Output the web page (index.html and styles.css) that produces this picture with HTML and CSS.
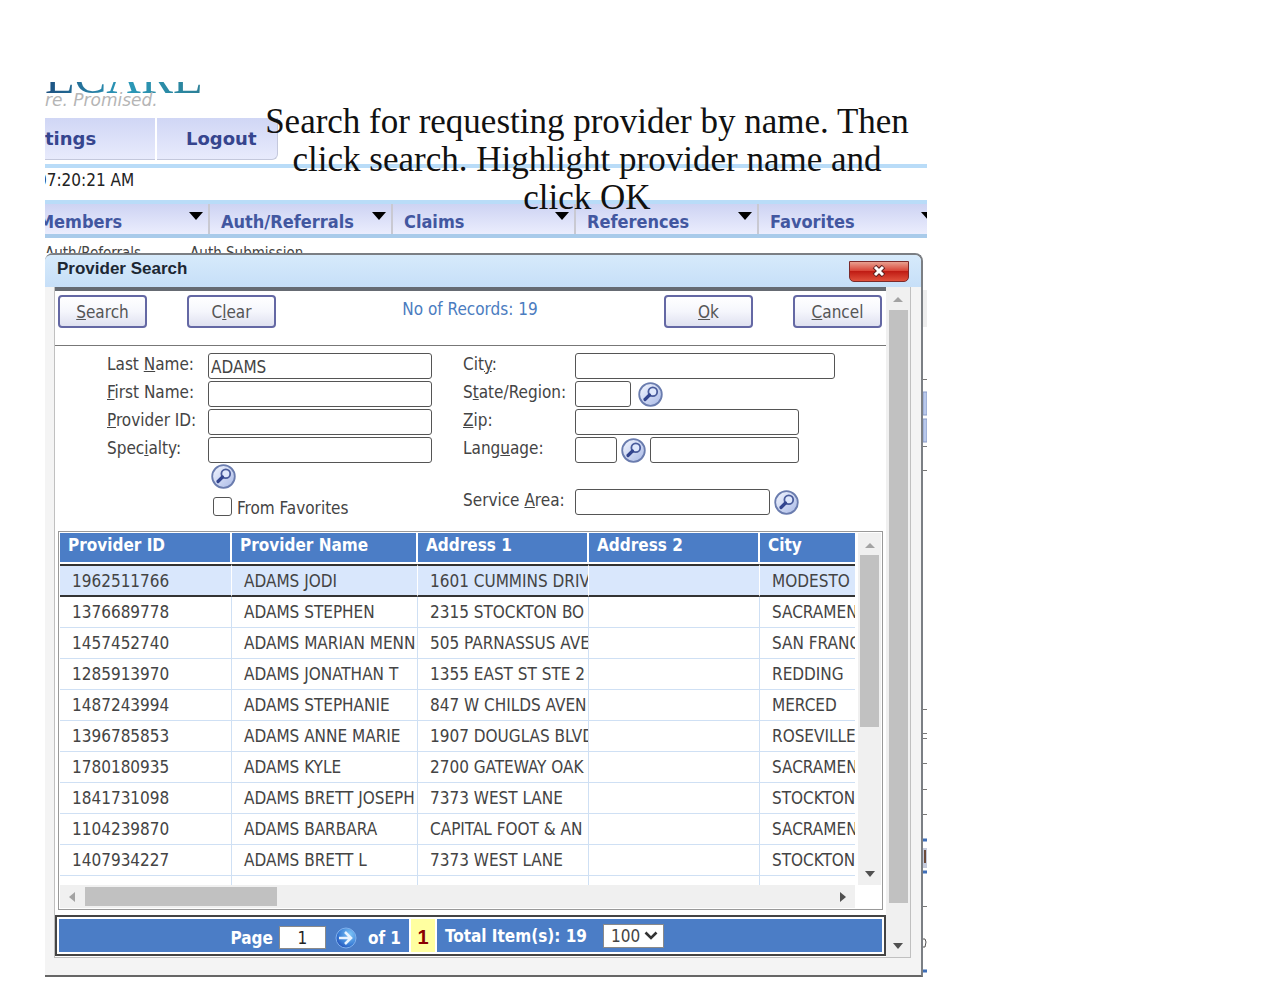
FILE: index.html
```html
<!DOCTYPE html>
<html lang="en">
  <head>
    <meta charset="UTF-8" />
    <meta name="viewport" content="width=device-width, initial-scale=1.0" />
    <title>Provider Search</title>
    <link rel="stylesheet" href="styles.css">
  </head>
  <body>
    <!-- shared icons -->
    <svg class="defs" aria-hidden="true">
      <defs>
        <linearGradient id="lens" x1="0" y1="0" x2="1" y2="1">
          <stop offset="0" stop-color="#f4f7ff" />
          <stop offset="1" stop-color="#a9b9e6" />
        </linearGradient>
        <radialGradient id="ball" cx="0.7" cy="0.3" r="0.9">
          <stop offset="0" stop-color="#7cc4f8" />
          <stop offset="0.6" stop-color="#3b7fd6" />
          <stop offset="1" stop-color="#1c3fae" />
        </radialGradient>
      </defs>
      <symbol id="find" viewBox="0 0 25 25">
        <circle cx="12.5" cy="12.5" r="11.3" fill="url(#lens)" stroke="#6a7cae" stroke-width="1.8" />
        <circle cx="14.8" cy="9.8" r="4.4" fill="#dfe8fc" stroke="#4a5c9c" stroke-width="1.8" />
        <path d="M11.5 13 L7 17.5" stroke="#33458f" stroke-width="3.2" stroke-linecap="round" />
      </symbol>
    </svg>

    <div class="page">
      <header>
        <div class="logo">ECARE</div>
        <div class="tagline">re. Promised.</div>
        <nav class="tabs">
          <a href="#" class="tab first">tings</a>
          <a href="#" class="tab last">Logout</a>
        </nav>
        <div class="time"><span>07:20:21 AM</span></div>
        <nav class="menu">
          <a href="#">Members</a>
          <a href="#">Auth/Referrals</a>
          <a href="#">Claims</a>
          <a href="#">References</a>
          <a href="#">Favorites</a>
        </nav>
        <div class="crumbs"><span>Auth/Referrals</span><span>Auth Submission</span></div>
      </header>

      <p class="note">Search for requesting provider by name. Then click search. Highlight provider name and click OK</p>

      <div class="stage">
        <div class="dialog">
          <div class="titlebar">
            <h1>Provider Search</h1>
            <button class="close" aria-label="Close">
              <svg width="14" height="12" viewBox="0 0 14 12">
                <path d="M2.5 1.5 L11.5 10.5 M11.5 1.5 L2.5 10.5" stroke="#5c2020" stroke-width="5" />
                <path d="M3 2 L11 10 M11 2 L3 10" stroke="#fff" stroke-width="3" />
              </svg>
            </button>
          </div>

          <div class="body">
            <div class="content">
              <div class="toolbar">
                <button><u>S</u>earch</button>
                <button>C<u>l</u>ear</button>
                <span class="records">No of Records: 19</span>
                <button><u>O</u>k</button>
                <button><u>C</u>ancel</button>
              </div>

              <form class="fields">
                <div class="col">
                  <div class="row"><label for="last">Last <u>N</u>ame:</label><input type="text" id="last" class="w224" value="ADAMS"></div>
                  <div class="row"><label for="firstname"><u>F</u>irst Name:</label><input type="text" id="firstname" class="w224"></div>
                  <div class="row"><label for="pid"><u>P</u>rovider ID:</label><input type="text" id="pid" class="w224"></div>
                  <div class="row"><label for="spec">Spec<u>i</u>alty:</label><input type="text" id="spec" class="w224"></div>
                  <div class="under">
                    <button type="button" class="find" aria-label="Find specialty"><svg><use href="#find" /></svg></button>
                  </div>
                  <div class="under fav">
                    <input type="checkbox" id="fav"><label for="fav">From Favorites</label>
                  </div>
                </div>
                <div class="col right">
                  <div class="row"><label for="city">Cit<u>y</u>:</label><input type="text" id="city" class="w260"></div>
                  <div class="row"><label for="state">S<u>t</u>ate/Region:</label><input type="text" id="state" class="w56">
                    <button type="button" class="find wide" aria-label="Find state"><svg><use href="#find" /></svg></button></div>
                  <div class="row"><label for="zip"><u>Z</u>ip:</label><input type="text" id="zip" class="w224"></div>
                  <div class="row"><label for="lang">Lang<u>u</u>age:</label><input type="text" id="lang" class="w42">
                    <button type="button" class="find" aria-label="Find language"><svg><use href="#find" /></svg></button>
                    <input type="text" aria-label="Language name" class="w149"></div>
                  <div class="row area"><label for="area">Service <u>A</u>rea:</label><input type="text" id="area" class="w195">
                    <button type="button" class="find" aria-label="Find service area"><svg><use href="#find" /></svg></button></div>
                </div>
              </form>

              <div class="results">
                <div class="rows">
                  <div class="clip">
                    <table>
                      <colgroup>
                        <col class="c-id"><col class="c-name"><col class="c-addr"><col class="c-addr"><col>
                      </colgroup>
                      <thead>
                        <tr><th>Provider ID</th><th>Provider Name</th><th>Address 1</th><th>Address 2</th><th>City</th></tr>
                      </thead>
                      <tbody>
                        <tr class="selected"><td>1962511766</td><td>ADAMS JODI</td><td>1601 CUMMINS DRIV</td><td></td><td>MODESTO</td></tr>
                        <tr><td>1376689778</td><td>ADAMS STEPHEN</td><td>2315 STOCKTON BO</td><td></td><td>SACRAMEN</td></tr>
                        <tr><td>1457452740</td><td>ADAMS MARIAN MENN</td><td>505 PARNASSUS AVE</td><td></td><td>SAN FRANC</td></tr>
                        <tr><td>1285913970</td><td>ADAMS JONATHAN T</td><td>1355 EAST ST STE 2</td><td></td><td>REDDING</td></tr>
                        <tr><td>1487243994</td><td>ADAMS STEPHANIE</td><td>847 W CHILDS AVEN</td><td></td><td>MERCED</td></tr>
                        <tr><td>1396785853</td><td>ADAMS ANNE MARIE</td><td>1907 DOUGLAS BLVD</td><td></td><td>ROSEVILLE</td></tr>
                        <tr><td>1780180935</td><td>ADAMS KYLE</td><td>2700 GATEWAY OAK</td><td></td><td>SACRAMEN</td></tr>
                        <tr><td>1841731098</td><td>ADAMS BRETT JOSEPH</td><td>7373 WEST LANE</td><td></td><td>STOCKTON</td></tr>
                        <tr><td>1104239870</td><td>ADAMS BARBARA</td><td>CAPITAL FOOT &amp; AN</td><td></td><td>SACRAMEN</td></tr>
                        <tr><td>1407934227</td><td>ADAMS BRETT L</td><td>7373 WEST LANE</td><td></td><td>STOCKTON</td></tr>
                        <tr><td></td><td></td><td></td><td></td><td></td></tr>
                      </tbody>
                    </table>
                  </div>
                  <div class="vbar">
                    <i class="up"></i>
                    <div class="thumb short"></div>
                    <i class="down"></i>
                  </div>
                </div>
                <div class="hbar">
                  <i class="left"></i>
                  <div class="hthumb"></div>
                  <i class="next"></i>
                </div>
              </div>

              <div class="pager">
                <div class="pages">
                  <label for="page">Page</label>
                  <input type="text" id="page" value="1">
                  <button class="go" aria-label="Go to page">
                    <svg width="22" height="22" viewBox="0 0 22 22">
                      <circle cx="11" cy="11" r="10" fill="url(#ball)" stroke="#7fb0ec" />
                      <path d="M4 11 H15 M10 5 L16 11 L10 17" fill="none" stroke="#e8f3ff" stroke-width="2.6" />
                    </svg>
                  </button>
                  <span>of 1</span>
                </div>
                <a href="#" class="current">1</a>
                <div class="total">
                  <label for="size">Total Item(s): 19</label>
                  <span class="size">
                    <select id="size"><option>100</option></select>
                    <svg width="14" height="9" viewBox="0 0 14 9"><path d="M1.5 1.5 L7 7 L12.5 1.5" fill="none" stroke="#333" stroke-width="2.6" /></svg>
                  </span>
                </div>
              </div>
            </div>

            <div class="vbar outer">
              <i class="up"></i>
              <div class="thumb"></div>
              <i class="down"></i>
            </div>
          </div>
        </div>

        <!-- edge of the form behind the dialog -->
        <svg class="edge" width="4" height="724" viewBox="0 0 4 724">
          <path d="M0 37 H4 V74 H0 Z" fill="#eeeeee" />
          <path d="M0 139 H4 V162 H0 Z M0 166 H4 V189 H0 Z" fill="#b9c9ec" stroke="#8a9cc8" />
          <path d="M0 126.5 H4 M0 193.5 H4 M0 217.5 H4 M0 456.5 H4 M0 480.5 H4 M0 485.5 H4 M0 510.5 H4 M0 536.5 H4 M0 561.5 H4 M0 653.5 H4" stroke="#777" />
          <path d="M0 587 H4 M0 619 H4 M0 718 H4" stroke="#3f6fb8" stroke-width="3" />
          <path d="M0 595 H4 V615 H0 Z" fill="#c5cbdc" />
          <path d="M2 597 V610" stroke="#6b4a3a" stroke-width="2" />
          <path d="M0 686 H2 L3 689 L2 694 H0" fill="none" stroke="#555" />
        </svg>
      </div>
    </div>
  </body>
</html>
```
FILE: styles.css
```css
/* CSS styles */
* {
  box-sizing: border-box;
}

body {
  margin: 0;
  padding: 82px 45px 0;
  background-color: #fff;
  font-family: "DejaVu Sans Condensed", "Noto Sans", sans-serif;
  font-size: 17px;
  color: #444;
}

.defs {
  position: absolute;
  width: 0;
  height: 0;
}

.page {
  position: relative;
  max-width: 882px;
  overflow: hidden;
}

a {
  text-decoration: none;
}

button,
input,
select {
  font: inherit;
  color: inherit;
}

/* header */
.logo {
  display: flex;
  align-items: flex-end;
  width: max-content;
  height: 11px;
  overflow: hidden;
  font-family: "Liberation Serif", serif;
  font-size: 48px;
  line-height: 32px;
  background: linear-gradient(90deg, #1d5080, #2b9aba 50%, #2b7f96);
  background-clip: text;
  -webkit-background-clip: text;
  color: transparent;
}

.tagline {
  height: 14px;
  font-family: "DejaVu Sans", sans-serif;
  font-size: 17px;
  font-style: italic;
  line-height: 14px;
  color: #b5b5b5;
}

.tabs {
  display: flex;
  gap: 2px;
  margin-top: 11px;
}

.tab {
  height: 42px;
  background: linear-gradient(#d0d6f5, #e8ebfc);
  border-bottom: 1px solid #c4c8dc;
  font-family: "DejaVu Sans", sans-serif;
  font-size: 18px;
  font-weight: bold;
  line-height: 42px;
  color: #36458e;
}

.first {
  width: 110px;
}

.last {
  width: 121px;
  padding-left: 29px;
  border-right: 1px solid #c4c8dc;
  border-bottom-right-radius: 6px;
}

.time {
  height: 36px;
  margin-top: 4px;
  border-top: 4px solid #b9dcf8;
  line-height: 24px;
  color: #222;
}

.time span {
  margin-left: -8px;
}

.menu {
  display: flex;
  width: 1098px;
  height: 38px;
  margin-left: -18px;
  border-top: 4px solid #b9dcf8;
  border-bottom: 4px solid #a9cbea;
  background: linear-gradient(#cdd3f3, #ebedfd);
}

.menu a {
  display: flex;
  justify-content: space-between;
  width: 183px;
  padding-left: 11px;
  padding-right: 5px;
  border-right: 2px solid #c9c9d2;
  font-size: 18px;
  font-weight: bold;
  line-height: 36px;
  color: #4257a0;
}

.menu a::after {
  content: "";
  height: 8px;
  margin-top: 8px;
  border: 7px solid transparent;
  border-top: 8px solid #000;
  border-bottom: 0;
}

.crumbs {
  display: flex;
  gap: 49px;
  height: 15px;
  padding-top: 8px;
  overflow: hidden;
  font-size: 15px;
  line-height: 15px;
}

/* instruction text over the page */
.note {
  position: absolute;
  top: 21px;
  left: 217px;
  width: 650px;
  margin: 0;
  font-family: "Liberation Serif", serif;
  font-size: 35px;
  line-height: 38px;
  text-align: center;
  color: #111;
}

/* dialog */
.stage {
  display: flex;
}

.edge {
  flex: none;
}

.dialog {
  flex: 1;
  border: 2px solid #7b7f84;
  border-left: 0;
  border-bottom-color: #666;
  border-radius: 8px 8px 0 0;
  background-color: #f4f4f4;
}

.titlebar {
  display: flex;
  justify-content: space-between;
  align-items: center;
  height: 32px;
  padding: 0 12px;
  background: linear-gradient(#d6eafb, #c6dff8);
  border-radius: 6px 6px 0 0;
}

h1 {
  margin: 0;
  padding-bottom: 4px;
  font-family: "Liberation Sans", sans-serif;
  font-size: 17px;
  line-height: 24px;
  color: #1c2733;
}

.close {
  display: flex;
  align-items: center;
  justify-content: center;
  width: 60px;
  height: 21px;
  padding: 0;
  border: 1px solid #7c2a2a;
  border-radius: 0 0 5px 5px;
  background: linear-gradient(#e8a090, #d9473a 45%, #c01c14 50%, #e0503c);
}

.body {
  display: flex;
  margin: 0 10px 17px 9px;
  border: 1px solid #c0c0c0;
  border-top: 0;
  background-color: #fff;
}

.content {
  flex: 1;
  min-width: 0;
  padding-bottom: 1px;
  border-top: 4px solid #666b73;
}

.toolbar {
  display: flex;
  align-items: center;
  gap: 40px;
  height: 55px;
  padding: 4px 4px 18px 3px;
  border-bottom: 1px solid #777;
}

.toolbar button {
  width: 89px;
  height: 33px;
  padding: 2px 0 0;
  border: 2px solid #6468a4;
  border-radius: 4px;
  background: linear-gradient(#fff, #f5f6fc 50%, #dfe1f0);
  color: #555;
}

.records {
  flex: 1;
  padding-bottom: 4px;
  text-align: center;
  line-height: 24px;
  color: #4b7cc0;
}

/* search fields */
.fields {
  display: flex;
  height: 185px;
  padding: 6px 0 0 52px;
}

.col {
  width: 356px;
}

.row {
  display: flex;
  align-items: center;
  height: 28px;
}

.row label {
  width: 101px;
  padding-bottom: 4px;
  line-height: 24px;
  white-space: nowrap;
}

.right {
  flex: 1;
}

.right .row label {
  width: 112px;
}

.row input {
  height: 26px;
  padding: 2px 2px 0;
  border: 1px solid #555;
  border-radius: 3px;
  background-color: #fff;
}

.w42 { width: 42px; }
.w56 { width: 56px; }
.w149 { width: 149px; }
.w195 { width: 195px; }
.w224 { width: 224px; }
.w260 { width: 260px; }

.find {
  flex: none;
  width: 25px;
  height: 25px;
  margin: 0 4px;
  padding: 0;
  border: 0;
  background: none;
}

.find.wide {
  margin-left: 7px;
}

.find svg {
  display: block;
  width: 25px;
  height: 25px;
}

.area {
  margin-top: 24px;
}

.under {
  display: flex;
  align-items: center;
  height: 25px;
  padding-left: 100px;
}

.fav {
  gap: 5px;
  height: 34px;
  padding-left: 106px;
}

.fav input {
  appearance: none;
  width: 19px;
  height: 19px;
  margin: 0;
  border: 1px solid #555;
  border-radius: 3px;
}

.fav label {
  padding-top: 4px;
}

/* results */
.results {
  margin: 0 3px;
  padding: 1px;
  border: 1px solid #999;
}

.rows {
  display: flex;
  gap: 3px;
  height: 352px;
}

.clip {
  flex: 1;
  min-width: 0;
  overflow: hidden;
}

table {
  width: 100%;
  table-layout: fixed;
  border-collapse: separate;
  border-spacing: 0;
}

.c-id { width: 172px; }
.c-name { width: 186px; }
.c-addr { width: 171px; }

th,
td {
  padding: 0;
  overflow: hidden;
  text-align: left;
  white-space: nowrap;
}

th {
  height: 31px;
  padding: 0 0 6px 8px;
  border-right: 2px solid #fff;
  border-bottom: 2px solid #fff;
  background-color: #4b7dc6;
  color: #fff;
}

td {
  height: 31px;
  padding-left: 12px;
  border-right: 1px solid #cfe0f4;
  border-bottom: 1px solid #cfe0f4;
}

th:last-child,
td:last-child {
  border-right: 0;
}

.selected td {
  height: 33px;
  border-top: 2px solid #333;
  border-bottom: 2px solid #333;
  border-right-color: #fff;
  background-color: #d9e7fc;
}

/* scroll bars */
.vbar {
  display: flex;
  flex-direction: column;
  align-items: center;
  justify-content: space-between;
  width: 23px;
  padding: 10px 0 8px;
  background-color: #f0f0f0;
}

.outer {
  width: 24px;
}

.thumb {
  flex: 1;
  width: 19px;
  margin: 8px 0 40px;
  background-color: #c1c1c1;
}

.short {
  flex: none;
  height: 172px;
  margin: 7px 0 auto;
}

.up,
.down {
  border: 5px solid transparent;
}

.up {
  border-top: 0;
  border-bottom-color: #a3a3a3;
}

.down {
  border-bottom: 0;
  border-top: 6px solid #505050;
}

.hbar {
  display: flex;
  align-items: center;
  justify-content: space-between;
  height: 23px;
  margin-right: 26px;
  padding: 0 9px;
  background-color: #f0f0f0;
}

.hthumb {
  width: 192px;
  height: 19px;
  margin: 0 auto 0 10px;
  background-color: #c1c1c1;
}

.left,
.next {
  border: 5px solid transparent;
}

.left {
  border-left: 0;
  border-right: 6px solid #a3a3a3;
}

.next {
  border-right: 0;
  border-left: 6px solid #505050;
}

/* pager */
.pager {
  display: flex;
  gap: 2px;
  height: 41px;
  margin-top: 5px;
  padding: 2px;
  border: 2px solid #444;
  font-weight: bold;
  color: #fff;
}

.pages,
.total {
  display: flex;
  align-items: center;
  background-color: #4b7dc6;
}

.pages {
  justify-content: flex-end;
  width: 350px;
  padding: 4px 8px 0 0;
}

.pages input {
  width: 47px;
  height: 23px;
  margin: 0 9px 0 6px;
  padding: 0;
  border: 1px solid #8a8a8a;
  background-color: #fff;
  font-weight: normal;
  text-align: center;
  color: #222;
}

.go {
  width: 22px;
  height: 22px;
  margin-right: 11px;
  padding: 0;
  border: 0;
  background: none;
}

.go svg {
  display: block;
}

.current {
  width: 24px;
  background-color: #ffffa0;
  font-family: "Liberation Sans", sans-serif;
  font-size: 20px;
  line-height: 36px;
  text-align: center;
  color: #8b0000;
}

.total {
  flex: 1;
  gap: 16px;
  padding-left: 8px;
}

.size {
  display: flex;
  align-items: center;
  width: 61px;
  height: 24px;
  background-color: #fff;
  color: #444;
}

.size select {
  appearance: none;
  width: 61px;
  height: 24px;
  margin-right: -20px;
  padding: 0 0 0 7px;
  border: 1px solid #8a8a8a;
  background: none;
  font-weight: normal;
}

.size svg {
  flex: none;
}
```
